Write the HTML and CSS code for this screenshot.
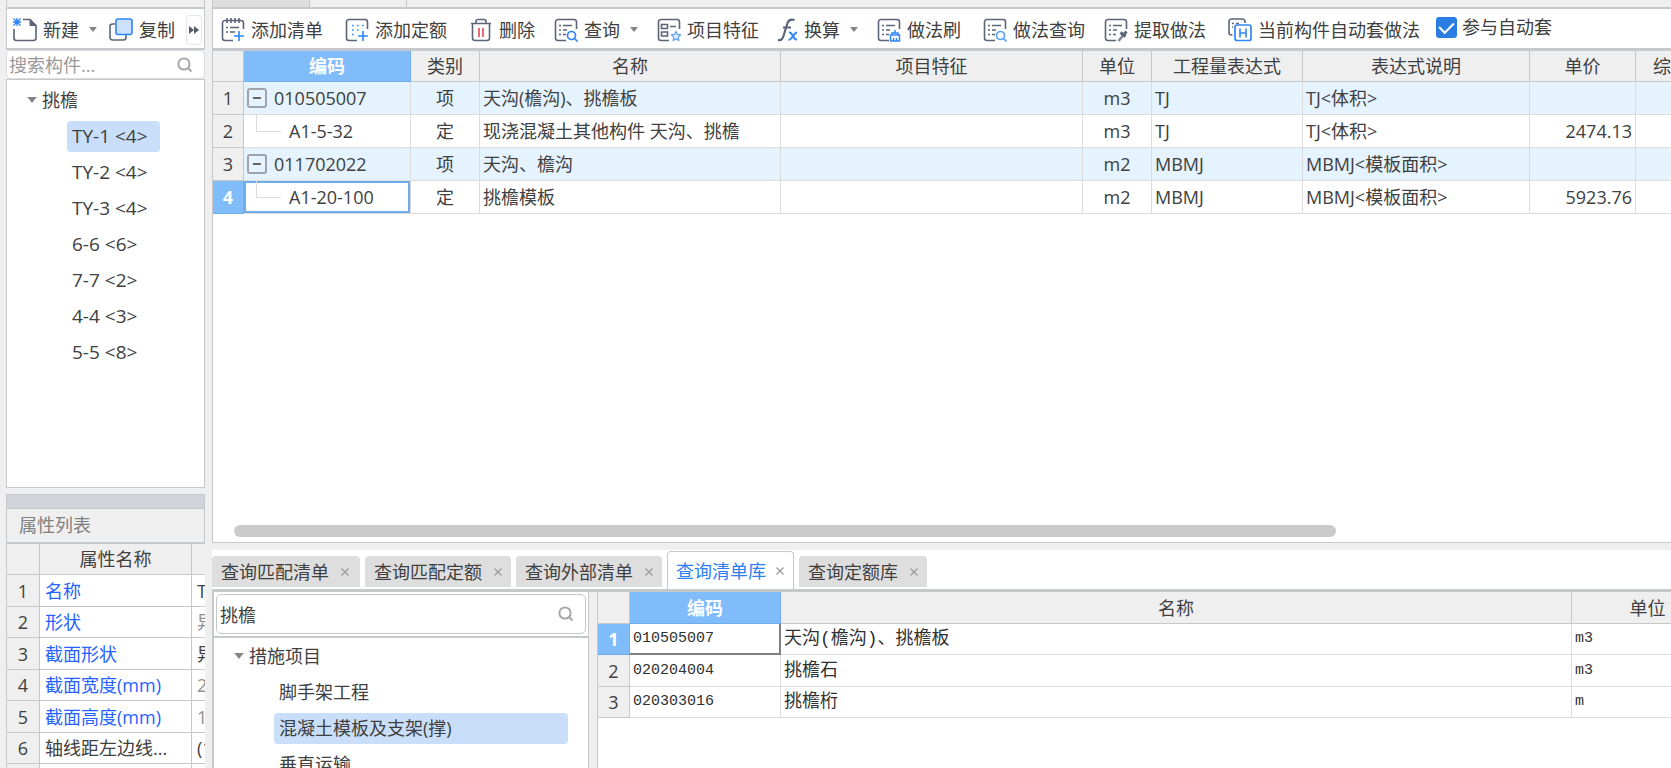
FILE: index.html
```html
<!DOCTYPE html>
<html lang="zh-CN">
<head>
<meta charset="utf-8">
<title>构件做法</title>
<link rel="stylesheet" href="styles.css">
</head>
<body>
<svg class="symbols" aria-hidden="true">
  <symbol id="caret" viewBox="0 0 8 5"><path d="M0 0h8L4 5z" fill="#858585"/></symbol>
  <symbol id="search" viewBox="0 0 16 16"><g fill="none" stroke="#a8a8a8" stroke-width="2"><circle cx="7" cy="7" r="5.6"/><path d="M11 11l3.500 3.500"/></g></symbol>
  <symbol id="close" viewBox="0 0 8 8"><path d="M0.5 0.5l7 7M7.5 0.5l-7 7" stroke="#9a9a9a" stroke-width="1.2"/></symbol>
  <symbol id="sheet" viewBox="0 0 24 24"><g fill="none" stroke="#5c6478" stroke-width="1.6"><path d="M12 22.5H4a2.500 2.500 0 0 1-2.500-2.500V4A2.500 2.500 0 0 1 4 1.500h16A2.500 2.500 0 0 1 22.500 4v7"/><path d="M5 7.500h2M9 7.500h9M5 12h2M9 12h4M5 16.500h2M9 16.500h3"/></g></symbol>
</svg>
<div class="app">
  <aside class="side">
    <div class="strip"></div>
    <div class="side-tools">
      <button class="tool" type="button">
        <svg class="icon" viewBox="0 0 24 24"><path d="M10 1.500h7l6 6V20a2.500 2.500 0 0 1-2.500 2.500H3.500A2.500 2.500 0 0 1 1 20v-9" fill="none" stroke="#5c6478" stroke-width="1.600"/><path d="M17 1.500v6h6z" fill="#5c6478" stroke="#5c6478"/><path d="M0 4h8M4 0v8M0.500 0.500l7 7M7.500 0.500l-7 7" stroke="#2f86f6" stroke-width="1.300"/></svg>
        <span>新建</span><svg class="caret"><use href="#caret"/></svg>
      </button>
      <button class="tool" type="button">
        <svg class="icon" viewBox="0 0 24 24"><path d="M6 6H3.500A2.500 2.500 0 0 0 1 8.500v11A2.500 2.500 0 0 0 3.500 22h11a2.500 2.500 0 0 0 2.500-2.500V17" fill="none" stroke="#5c6478" stroke-width="1.600"/><rect x="7" y="1" width="16" height="15.500" rx="2" fill="#cbe1fc" stroke="#2f86f6" stroke-width="1.600"/></svg>
        <span>复制</span>
      </button>
      <button class="more" type="button" aria-label="更多"><svg viewBox="0 0 10 8"><path d="M0 0l5 4-5 4zM5 0l5 4-5 4z" fill="#555b68"/></svg></button>
    </div>
    <div class="side-search"><input type="text" aria-label="搜索构件" placeholder="搜索构件..."><svg class="glass"><use href="#search"/></svg></div>
    <div class="tree">
      <div class="branch"><svg class="fold"><use href="#caret"/></svg>挑檐</div>
      <ul class="leaves">
        <li><button class="leaf selected" type="button">TY-1 &lt;4&gt;</button></li>
        <li><button class="leaf" type="button">TY-2 &lt;4&gt;</button></li>
        <li><button class="leaf" type="button">TY-3 &lt;4&gt;</button></li>
        <li><button class="leaf" type="button">6-6 &lt;6&gt;</button></li>
        <li><button class="leaf" type="button">7-7 &lt;2&gt;</button></li>
        <li><button class="leaf" type="button">4-4 &lt;3&gt;</button></li>
        <li><button class="leaf" type="button">5-5 &lt;8&gt;</button></li>
      </ul>
    </div>
    <section class="props">
      <div class="props-bar"></div>
      <h2 class="props-title">属性列表</h2>
      <table class="grid props-grid">
        <colgroup><col class="p-no"><col class="p-name"><col class="p-val"></colgroup>
        <thead><tr><th></th><th>属性名称</th><th></th></tr></thead>
        <tbody>
          <tr><th>1</th><td class="key">名称</td><td>T</td></tr>
          <tr><th>2</th><td class="key">形状</td><td class="dim">异</td></tr>
          <tr><th>3</th><td class="key">截面形状</td><td>异</td></tr>
          <tr><th>4</th><td class="key">截面宽度(mm)</td><td class="dim">2</td></tr>
          <tr><th>5</th><td class="key">截面高度(mm)</td><td class="dim">1</td></tr>
          <tr><th>6</th><td>轴线距左边线...</td><td>(1</td></tr>
          <tr><th></th><td></td><td></td></tr>
        </tbody>
      </table>
    </section>
  </aside>

  <main class="main">
    <div class="strip"><span class="strip-tab dark"></span><span class="strip-tab"></span></div>
    <section class="upper">
      <div class="toolbar">
        <button class="tool" type="button"><svg class="icon" viewBox="0 0 24 24"><g fill="none" stroke="#5c6478" stroke-width="1.600"><path d="M12 22.500H4a2.500 2.500 0 0 1-2.500-2.500V5A2.500 2.500 0 0 1 4 2.500h16A2.500 2.500 0 0 1 22.500 5v6M6 0v5M10 0v5M14 0v5M18 0v5M5 9.500h2M9 9.500h9M5 14h2M9 14h5"/></g><path d="M18 13v10M13 18h10" stroke="#2f86f6" stroke-width="1.600"/></svg><span>添加清单</span></button>
        <button class="tool" type="button"><svg class="icon" viewBox="0 0 24 24"><path d="M12 22.500H4a2.500 2.500 0 0 1-2.500-2.500V4A2.500 2.500 0 0 1 4 1.500h16A2.500 2.500 0 0 1 22.500 4v7" fill="none" stroke="#5c6478" stroke-width="1.600"/><path d="M18 13v10M13 18h10" stroke="#2f86f6" stroke-width="1.600"/><path d="M7 7.500h12M7 12h7M7 16.500h5" stroke="#2f86f6" stroke-width="1.600" stroke-dasharray="1.600 3.400"/></svg><span>添加定额</span></button>
        <button class="tool" type="button"><svg class="icon" viewBox="0 0 24 24"><path d="M2 5.500h20M7 5V3.500a2 2 0 0 1 2-2h6a2 2 0 0 1 2 2V5M3.500 6v14A2.500 2.500 0 0 0 6 22.500h12a2.500 2.500 0 0 0 2.500-2.500V6" fill="none" stroke="#5c6478" stroke-width="1.600"/><path d="M10 10v9M14 10v9" stroke="#e5484d" stroke-width="1.600"/></svg><span>删除</span></button>
        <button class="tool snug" type="button"><svg class="icon" viewBox="0 0 24 24"><use href="#sheet"/><g fill="none" stroke="#2f86f6" stroke-width="1.700"><circle cx="17.500" cy="17.500" r="4"/><path d="M20.500 20.500l3 3"/></g></svg><span>查询</span><svg class="caret"><use href="#caret"/></svg></button>
        <button class="tool snug" type="button"><svg class="icon" viewBox="0 0 24 24"><path d="M12 22.500H4a2.500 2.500 0 0 1-2.500-2.500V4A2.500 2.500 0 0 1 4 1.500h16A2.500 2.500 0 0 1 22.500 4v7M4.500 6.500h6v4h-6zM4.500 14h6v4h-6zM13 8.500h6" fill="none" stroke="#5c6478" stroke-width="1.600"/><path d="M19 13.500l1.400 2.900 3.100.5-2.200 2.300.5 3.200-2.800-1.500-2.800 1.500.5-3.200-2.200-2.300 3.100-.5z" fill="#e3effe" stroke="#5aa0f8" stroke-width="1.200"/></svg><span>项目特征</span></button>
        <button class="tool snug" type="button"><svg class="icon narrow" viewBox="0 0 20 24"><path d="M0 22c3 .8 4.500-.8 5.500-4L9.500 5C10.500 2 12.500.9 16.500 2M5 9.500h8" fill="none" stroke="#5c6478" stroke-width="2.200"/><path d="M11 14.500c4-1 3.500 7.500 8 7M19 14.500c-3 0-5 7.500-8.500 7.500" fill="none" stroke="#2f86f6" stroke-width="2"/></svg><span>换算</span><svg class="caret"><use href="#caret"/></svg></button>
        <button class="tool snug" type="button"><svg class="icon" viewBox="0 0 24 24"><use href="#sheet"/><path d="M13.500 17h9v6h-9zM15 17v-2h6v2M18 15v-3M16.500 23v-3M19.500 23v-3" fill="none" stroke="#2f86f6" stroke-width="1.500"/></svg><span>做法刷</span></button>
        <button class="tool" type="button"><svg class="icon" viewBox="0 0 24 24"><use href="#sheet"/><g fill="none" stroke="#5aa0f8" stroke-width="1.700"><circle cx="17.500" cy="17.500" r="4"/><path d="M20.500 20.500l3 3"/></g></svg><span>做法查询</span></button>
        <button class="tool snug" type="button"><svg class="icon" viewBox="0 0 24 24"><use href="#sheet"/><path d="M14.500 23l5-6" stroke="#7f8798" stroke-width="2.600"/><path d="M16.500 14.500l5 4M19.500 17l3-3.500" stroke="#5c6478" stroke-width="3"/></svg><span>提取做法</span></button>
        <button class="tool" type="button"><svg class="icon" viewBox="0 0 24 24"><path d="M4.500 17H3.500A2.500 2.500 0 0 1 1 14.500V3.500A2.500 2.500 0 0 1 3.500 1h11A2.500 2.500 0 0 1 17 3.500V5M4 5.500h2M4 9h1M8 5.500h3" fill="none" stroke="#5c6478" stroke-width="1.600"/><rect x="7" y="7" width="16" height="15.500" rx="2" fill="#fff" stroke="#2f86f6" stroke-width="1.700"/><path d="M12 10.500v9M18 10.500v9M12 15h6" stroke="#2f86f6" stroke-width="1.600"/></svg><span>当前构件自动套做法</span></button>
        <label class="auto"><input type="checkbox" checked><span>参与自动套</span></label>
      </div>
      <div class="sheet">
        <table class="grid items">
          <colgroup><col class="c-no"><col class="c-code"><col class="c-kind"><col class="c-name"><col class="c-feature"><col class="c-unit"><col class="c-expr"><col class="c-note"><col class="c-price"><col class="c-total"></colgroup>
          <thead><tr><th></th><th class="active">编码</th><th>类别</th><th>名称</th><th>项目特征</th><th>单位</th><th>工程量表达式</th><th>表达式说明</th><th>单价</th><th class="cut">综</th></tr></thead>
          <tbody>
            <tr class="group"><th>1</th><td class="code"><button class="minus" type="button" aria-label="折叠"></button>010505007</td><td class="mid">项</td><td>天沟(檐沟)、挑檐板</td><td></td><td class="mid">m3</td><td>TJ</td><td>TJ&lt;体积&gt;</td><td></td><td></td></tr>
            <tr><th>2</th><td class="code child"><i class="branch-line"></i>A1-5-32</td><td class="mid">定</td><td>现浇混凝土其他构件 天沟、挑檐</td><td></td><td class="mid">m3</td><td>TJ</td><td>TJ&lt;体积&gt;</td><td class="num">2474.13</td><td></td></tr>
            <tr class="group"><th>3</th><td class="code"><button class="minus" type="button" aria-label="折叠"></button>011702022</td><td class="mid">项</td><td>天沟、檐沟</td><td></td><td class="mid">m2</td><td>MBMJ</td><td>MBMJ&lt;模板面积&gt;</td><td></td><td></td></tr>
            <tr><th class="active">4</th><td class="code child focus"><i class="branch-line"></i>A1-20-100</td><td class="mid">定</td><td>挑檐模板</td><td></td><td class="mid">m2</td><td>MBMJ</td><td>MBMJ&lt;模板面积&gt;</td><td class="num">5923.76</td><td></td></tr>
          </tbody>
        </table>
        <div class="scroll"><div class="thumb"></div></div>
      </div>
    </section>

    <section class="lower">
      <div class="tabs">
        <div class="tab"><button type="button">查询匹配清单</button><button class="x" type="button" aria-label="关闭"><svg><use href="#close"/></svg></button></div>
        <div class="tab"><button type="button">查询匹配定额</button><button class="x" type="button" aria-label="关闭"><svg><use href="#close"/></svg></button></div>
        <div class="tab"><button type="button">查询外部清单</button><button class="x" type="button" aria-label="关闭"><svg><use href="#close"/></svg></button></div>
        <div class="tab current"><button type="button">查询清单库</button><button class="x" type="button" aria-label="关闭"><svg><use href="#close"/></svg></button></div>
        <div class="tab"><button type="button">查询定额库</button><button class="x" type="button" aria-label="关闭"><svg><use href="#close"/></svg></button></div>
      </div>
      <div class="split">
        <div class="library">
          <div class="library-search"><div class="box"><input type="text" aria-label="查询" value="挑檐"><svg class="glass"><use href="#search"/></svg></div></div>
          <div class="library-tree">
            <div class="branch"><svg class="fold"><use href="#caret"/></svg>措施项目</div>
            <ul class="leaves">
              <li><button class="leaf" type="button">脚手架工程</button></li>
              <li><button class="leaf selected" type="button">混凝土模板及支架(撑)</button></li>
              <li><button class="leaf" type="button">垂直运输</button></li>
            </ul>
          </div>
        </div>
        <div class="results">
          <table class="grid hits">
            <colgroup><col class="r-no"><col class="r-code"><col class="r-name"><col class="r-unit"></colgroup>
            <thead><tr><th></th><th class="active">编码</th><th>名称</th><th>单位</th></tr></thead>
            <tbody>
              <tr><th class="active">1</th><td class="mono picked">010505007</td><td class="title">天沟(檐沟)、挑檐板</td><td class="mono">m3</td></tr>
              <tr><th>2</th><td class="mono">020204004</td><td class="title">挑檐石</td><td class="mono">m3</td></tr>
              <tr><th>3</th><td class="mono">020303016</td><td class="title">挑檐桁</td><td class="mono">m</td></tr>
            </tbody>
          </table>
        </div>
      </div>
    </section>
  </main>
</div>
</body>
</html>
```
FILE: styles.css
```css
:root {
  --line: #c8c8c8;
  --frame: #c5c9cd;
  --soft: #dcdcdc;
  --panel: #efefef;
  --pick: #c9dff9;
  --head-pick: #80bbfa;
  --text: #404040;
}
* { box-sizing: border-box; }
body {
  margin: 0;
  background: var(--panel);
  color: var(--text);
  font: 18px/24px "Open Sans", "Noto Sans CJK SC", sans-serif;
}
button, input {
  font: inherit;
  color: inherit;
  border: 0;
  background: none;
  padding: 0;
  margin: 0;
}
input:focus { outline: 0; }
ul { list-style: none; margin: 0; padding: 0; }
.symbols { display: none; }

.app {
  display: grid;
  grid-template-columns: 199px minmax(0, 1fr);
  gap: 7px;
  height: 100vh;
  padding-left: 6px;
  overflow: hidden;
}
.side, .main { display: flex; flex-direction: column; min-height: 0; min-width: 0; }
.strip { display: flex; flex: none; height: 7px; }
.side .strip { border-left: 1px solid var(--line); border-right: 1px solid var(--line); }
.main .strip { border-left: 1px solid var(--line); }
.strip-tab { width: 97px; border-right: 1px solid var(--line); }
.strip-tab.dark { background: #dedede; }

/* toolbars */
.tool {
  display: flex;
  align-items: center;
  gap: 6px;
  margin-left: 22px;
  white-space: nowrap;
}
.tool:first-child { margin-left: 0; }
.tool.snug { margin-left: 19px; }
.icon { width: 24px; height: 24px; flex: none; }
.icon.narrow { width: 20px; }
.caret { width: 8px; height: 5px; margin-left: 4px; }
.side-tools, .toolbar {
  display: flex;
  align-items: center;
  flex: none;
  height: 43px;
  padding-top: 2px;
  background: #fff;
  border: solid var(--frame);
  border-width: 2px 1px;
}
.side-tools { padding-left: 6px; }
.side-tools .tool + .tool { margin-left: 12px; }
.more {
  display: flex;
  align-items: center;
  justify-content: center;
  width: 16px;
  height: 30px;
  margin-left: auto;
  margin-right: 2px;
  border: 1px solid #e6e6e6;
  border-radius: 4px;
}
.more svg { width: 10px; height: 8px; }
.toolbar { height: 44px; padding-left: 8px; border-right: 0; border-bottom-width: 3px; }
.auto { display: flex; align-items: center; gap: 5px; margin-left: 16px; padding-bottom: 5px; }
.auto input {
  appearance: none;
  width: 21px;
  height: 21px;
  border-radius: 3px;
  background: #2a7de1;
  display: grid;
  place-items: center;
}
.auto input:checked::before {
  content: "";
  width: 7px;
  height: 12px;
  margin-bottom: 3px;
  border: solid #fff;
  border-width: 0 2px 2px 0;
  transform: rotate(45deg);
}

/* component tree */
.side-search {
  display: flex;
  align-items: center;
  flex: none;
  height: 29px;
  padding: 0 11px 0 2px;
  background: #fff;
  border: 1px solid var(--soft);
  border-radius: 5px;
}
.side-search input, .box input { flex: 1; min-width: 0; height: 100%; }
.side-search input::placeholder { color: #9a9a9a; opacity: 1; }
.glass { width: 16px; height: 16px; flex: none; }
.tree {
  flex: 1;
  min-height: 0;
  overflow: hidden;
  background: #fff;
  border: 1px solid var(--line);
  padding: 2px 0 0 20px;
}
.branch { display: flex; align-items: center; gap: 5px; height: 36px; }
.fold { width: 10px; height: 6px; }
.leaves li { display: flex; align-items: center; height: 36px; }
.leaf {
  height: 31px;
  padding: 0 5px;
  border-radius: 4px;
  text-align: left;
  white-space: nowrap;
}
.leaf.selected { background: var(--pick); }
.tree .leaves { padding-left: 40px; }
.tree .leaf { min-width: 93px; font-size: 19px; }

/* tables */
.grid { border-collapse: separate; border-spacing: 0; table-layout: fixed; background: #fff; }
.grid th, .grid td {
  height: 33px;
  padding: 0 3px;
  border: solid var(--soft);
  border-width: 0 1px 1px 0;
  white-space: nowrap;
  overflow: hidden;
  text-align: left;
  line-height: 24px;
}
.grid th {
  padding: 0;
  font-weight: 400;
  text-align: center;
  background: var(--panel);
  border-color: var(--line);
}
.grid th.active { background: var(--head-pick); color: #fff; font-weight: 700; border-color: #70acee; }
.grid td.mid { text-align: center; }
.grid td.num { text-align: right; }
.grid th.cut { text-align: left; padding-left: 17px; }

/* property list */
.props { flex: 0 0 280px; padding-top: 6px; overflow: hidden; }
.props-bar { height: 15px; background: #d1d4da; border: 1px solid var(--frame); }
.props-title {
  margin: 0;
  height: 35px;
  padding: 4px 12px;
  font-size: 18px;
  font-weight: 400;
  color: #808080;
  border: solid var(--frame);
  border-width: 0 1px 2px;
}
.props-grid { width: 100%; border-left: 1px solid var(--line); }
.p-no { width: 33px; }
.p-name { width: 152px; }
.grid.props-grid th, .grid.props-grid td { height: 32px; border-color: var(--line); }
.grid.props-grid tr > :last-child { border-right: 0; }
.grid.props-grid td { padding: 0 0 0 5px; }
.grid.props-grid thead th, .grid.props-grid tbody tr:nth-child(even) > * { height: 31px; }
.props-grid .key { color: #2563ff; }
.props-grid .dim { color: #909090; }

/* item table */
.upper { flex: 1; min-height: 0; display: flex; flex-direction: column; background: #fff; }
.sheet {
  flex: 1;
  min-height: 0;
  overflow: hidden;
  display: flex;
  flex-direction: column;
  border: solid var(--line);
  border-width: 0 0 1px 1px;
}
.items { width: 1529px; flex: none; }
.grid.items thead th { height: 31px; }
.c-no { width: 31px; }
.c-code { width: 167px; }
.c-kind { width: 69px; }
.c-name { width: 301px; }
.c-feature { width: 302px; }
.c-unit { width: 69px; }
.c-expr { width: 151px; }
.c-note { width: 227px; }
.c-price { width: 106px; }
.c-total { width: 106px; }
.group td { background: #e5f3fe; }
.grid .code { position: relative; padding-left: 30px; }
.grid .code.child { padding-left: 45px; }
.minus {
  position: absolute;
  left: 3px;
  top: 6px;
  width: 20px;
  height: 20px;
  border: 2px solid #a0a4a8;
  border-radius: 3px;
}
.minus::before { content: ""; display: block; width: 8px; height: 2px; margin: 0 auto; background: #666; }
.branch-line {
  position: absolute;
  left: 12px;
  top: 0;
  width: 25px;
  height: 17px;
  border: solid var(--soft);
  border-width: 0 0 1px 1px;
}
.grid .focus { box-shadow: inset 0 0 0 2px #6eaceb; }
.scroll { margin-top: auto; padding: 0 335px 5px 21px; }
.thumb { height: 12px; border-radius: 6px; background: #cbcbcb; }

/* query panel */
.lower {
  flex: 0 0 218px;
  margin-top: 7px;
  display: flex;
  flex-direction: column;
  background: #fff;
  overflow: hidden;
}
.tabs { display: flex; align-items: flex-end; gap: 5px; flex: none; height: 42px; border-bottom: 3px solid var(--frame); }
.tab {
  display: flex;
  align-items: center;
  gap: 12px;
  height: 31px;
  margin-bottom: 2px;
  padding: 0 9px;
  border-radius: 4px 4px 0 0;
  background: #dedede;
  white-space: nowrap;
}
.tab:first-child { padding-right: 11px; }
.tab.current {
  height: 38px;
  margin-bottom: 0;
  padding: 0 9px 0 8px;
  gap: 10px;
  background: #fff;
  border: 1px solid var(--line);
  border-bottom: 0;
  color: #2a80ee;
}
.x { display: flex; }
.x svg { width: 8px; height: 8px; }
.split { flex: 1; min-height: 0; display: flex; gap: 8px; background: var(--panel); }
.library { flex: 0 0 377px; overflow: hidden; background: #fff; border: solid var(--frame); border-width: 0 1px 0 2px; }
.library-search { padding: 2px; border-bottom: 2px solid var(--frame); }
.box { display: flex; align-items: center; height: 40px; padding: 0 11px 0 3px; border: 1px solid var(--line); border-radius: 5px; }
.library-tree { padding: 0 20px; }
.library-tree .leaves { padding-left: 40px; }
.library-tree .leaf { width: 100%; }
.results { flex: 1; min-width: 0; overflow: hidden; background: #fff; border-left: 1px solid var(--line); }
.hits { width: 1126px; }
.r-no { width: 32px; }
.r-code { width: 151px; }
.r-name { width: 791px; }
.r-unit { width: 152px; }
.grid.hits th, .grid.hits td { height: 31px; }
.grid.hits thead th, .grid.hits tbody tr:nth-child(even) > * { height: 32px; }
.grid.hits td { padding: 0 3px; color: #303030; }
.grid.hits .mono { font-family: "Liberation Mono", monospace; font-size: 15px; }
.grid.hits .title { font-family: "Liberation Mono", "Noto Sans CJK SC", monospace; }
.grid.hits .picked { border-color: #808080; border-width: 0 2px 2px 0; }
```
